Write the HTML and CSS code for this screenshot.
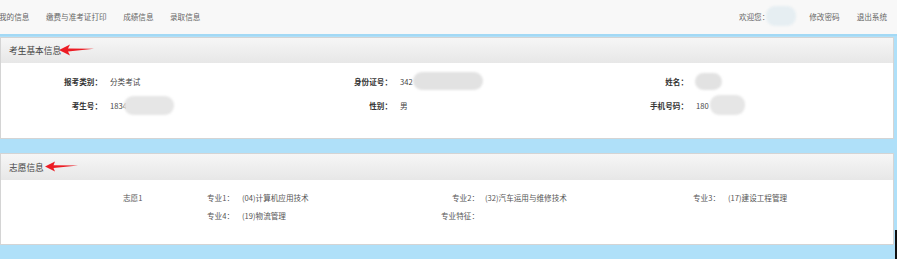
FILE: index.html
```html
<!DOCTYPE html>
<html lang="zh-CN">
<head>
<meta charset="utf-8">
<title>考生信息</title>
<link rel="stylesheet" href="styles.css">
</head>
<body>
<header class="topbar">
  <nav class="menu">
    <a class="menu-item first">我的信息</a>
    <a class="menu-item">缴费与准考证打印</a>
    <a class="menu-item">成绩信息</a>
    <a class="menu-item">录取信息</a>
  </nav>
  <div class="user">
    <span class="welcome">欢迎您：</span><span class="blur blur-user"></span>
    <a class="user-link">修改密码</a>
    <a class="user-link">退出系统</a>
  </div>
</header>
<main class="content">
  <section class="panel">
    <div class="panel-head">
      <span class="panel-title">考生基本信息</span><svg class="arrow" width="35" height="12" viewBox="0 0 35 12"><polygon points="0,6 11,0.5 9,4.6 35,4.8 9,7.6 11,11.5" fill="#ec1c24"/></svg>
    </div>
    <div class="panel-body info-grid">
      <span class="lbl">报考类别：</span><span class="val">分类考试</span>
      <span class="lbl">身份证号：</span><span class="val">342<span class="blur blur-id"></span></span>
      <span class="lbl">姓名：</span><span class="val"><span class="blur blur-name"></span></span>
      <span class="lbl">考生号：</span><span class="val">1834<span class="blur blur-no"></span></span>
      <span class="lbl">性别：</span><span class="val">男</span>
      <span class="lbl">手机号码：</span><span class="val">180<span class="blur blur-phone"></span></span>
    </div>
  </section>
  <section class="panel panel-wish">
    <div class="panel-head">
      <span class="panel-title">志愿信息</span><svg class="arrow" width="33" height="11" viewBox="0 0 33 11"><polygon points="0,5.5 10,0.5 8.5,4.2 33,4.4 8.5,7 10,10.5" fill="#ec1c24"/></svg>
    </div>
    <div class="panel-body wish-grid">
      <span class="wish-name">志愿1</span>
      <span class="w-lbl">专业1：</span><span class="w-val">(04)计算机应用技术</span>
      <span class="w-lbl right">专业2：</span><span class="w-val pad">(32)汽车运用与维修技术</span>
      <span class="w-lbl">专业3：</span><span class="w-val">(17)建设工程管理</span>
      <span class="wish-name"></span>
      <span class="w-lbl">专业4：</span><span class="w-val">(19)物流管理</span>
      <span class="w-lbl right">专业特征：</span><span class="w-val pad"></span>
      <span class="w-lbl"></span><span class="w-val"></span>
    </div>
  </section>
  <div class="edge-mark"></div>
</main>
</body>
</html>
```

FILE: styles.css
```css
* { box-sizing: border-box; }
html, body { margin: 0; padding: 0; }
body {
  font-family: "Noto Sans CJK SC", "Noto Sans", sans-serif;
  font-size: 7.6px;
  color: #555;
  background: #afe0f9;
  height: 259px;
  overflow: hidden;
  position: relative;
}
a { text-decoration: none; color: inherit; }

.topbar {
  height: 36px;
  background: #f8f8f8;
  border-bottom: 2px solid #a3d9f5;
  display: flex;
  justify-content: space-between;
  align-items: center;
  padding: 0 10px 2px 0;
  color: #666;
}
.menu { display: flex; gap: 16.5px; }
.menu-item.first { margin-left: -1px; }
.user { display: flex; align-items: center; }
.welcome { color: #666; }
.user-link { margin-left: 13px; }
.user-link + .user-link { margin-left: 17px; }

.blur {
  display: inline-block;
  background: #e2e2e2;
  border-radius: 9px;
  filter: blur(1.2px);
  vertical-align: middle;
}
.blur-user { width: 30px; height: 20px; margin-left: -3px; background: #e6eef2; }
.blur-id { width: 70px; height: 18px; margin-left: 0; }
.blur-no { width: 50px; height: 19px; margin-left: -3px; background: #e6e6e6; }
.blur-name { width: 27px; height: 17px; margin-left: -1px; }
.blur-phone { width: 35px; height: 20px; margin-left: 1px; background: #e6e6e6; }

.content {
  padding: 1px 3px 0 0;
}
.panel {
  background: #fff;
  border: 1px solid #d4d4d4;
}
.panel-wish { margin-top: 14px; }
.panel-head {
  height: 25px;
  display: flex;
  align-items: center;
  padding-left: 8px;
  background: linear-gradient(#f6f6f6, #e7e7e7);
}
.panel-wish .panel-head { height: 26px; }
.panel-title {
  font-size: 8.7px;
  color: #444;
}
.arrow { margin-left: -2px; margin-top: -2px; display: block; }
.panel-wish .arrow { margin-left: 1px; }

.info-grid {
  display: grid;
  grid-template-columns: 101px 199px 91px 208px 88px 1fr;
  grid-auto-rows: 24px;
  padding: 6px 0 21px;
  align-items: center;
}
.lbl {
  text-align: right;
  font-weight: bold;
  color: #333;
}
.val {
  padding-left: 8px;
  color: #444;
  display: flex;
  align-items: center;
}

.wish-grid {
  display: grid;
  grid-template-columns: 206px 35px 189px 48px 214px 35px 1fr;
  grid-auto-rows: 18px;
  padding: 8px 0 20px;
  align-items: center;
  color: #555;
}
.wish-name { padding-left: 122px; }
.w-lbl.right { text-align: right; }
.w-val.pad { padding-left: 6px; }

.edge-mark {
  position: absolute;
  right: 0;
  bottom: 0;
  width: 2px;
  height: 29px;
  background: #111;
}
```
